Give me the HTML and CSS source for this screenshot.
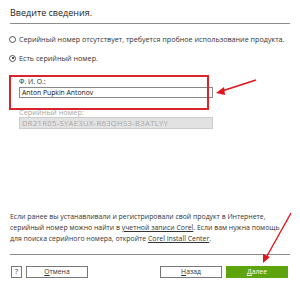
FILE: index.html
```html
<!DOCTYPE html>
<html lang="ru">
<head>
<meta charset="utf-8">
<link rel="stylesheet" href="styles.css">
</head>
<body>
<div class="dialog">
  <div class="title">Введите сведения.</div>
  <div class="rule top-rule"></div>
  <div class="radio-row r1"><span class="radio"></span><span>Серийный номер отсутствует, требуется пробное использование продукта.</span></div>
  <div class="radio-row r2"><span class="radio checked"></span><span>Есть серийный номер.</span></div>
  <div class="fields">
    <div class="label">Ф. И. О.:</div>
    <div class="input">Anton Pupkin Antonov</div>
    <div class="label muted">Серийный номер:</div>
    <div class="input disabled">DR21R05-SYAE3UX-R63QHS3-B3ATLYY</div>
  </div>
  <div class="spacer"></div>
  <div class="info">
    <div>Если ранее вы устанавливали и регистрировали свой продукт в Интернете,</div>
    <div>серийный номер можно найти в <span class="link">учетной записи Corel</span>. Если вам нужна помощь</div>
    <div>для поиска серийного номера, откройте <span class="link">Corel Install Center</span>.</div>
  </div>
  <div class="rule bottom-rule"></div>
  <div class="buttons">
    <div class="left">
      <span class="btn help">?</span>
      <span class="btn wide"><span class="key">О</span>тмена</span>
    </div>
    <div class="right">
      <span class="btn wide"><span class="key">Н</span>азад</span>
      <span class="btn wide primary"><span class="key">Д</span>алее</span>
    </div>
  </div>
  <div class="highlight"></div>
  <svg class="arrows" width="300" height="286" viewBox="0 0 300 286">
    <line x1="256" y1="80" x2="222" y2="91" stroke="#e0161c" stroke-width="1.6"/>
    <polygon points="216,93 224,87 225,95" fill="#e0161c"/>
    <line x1="291" y1="213" x2="267" y2="256" stroke="#e0161c" stroke-width="1.4"/>
    <polygon points="263,263 263,254 270,257" fill="#e0161c"/>
  </svg>
</div>
</body>
</html>
```
FILE: styles.css
```css
html, body { margin: 0; padding: 0; background: #fff; }
.dialog {
  position: relative;
  width: 300px;
  height: 286px;
  font-family: "Open Sans", "Noto Sans", sans-serif;
  color: #222;
  display: flex;
  flex-direction: column;
  overflow: hidden;
}
.title { font-size: 9px; margin: 7px 0 0 10px; line-height: 12px; }
.rule { height: 1px; background: #8c8c8c; margin: 0 10px; }
.top-rule { margin-top: 4px; }
.radio-row { display: flex; align-items: center; gap: 3px; font-size: 7.2px; margin-left: 9px; line-height: 10px; color: #333; }
.r1 { margin-top: 10px; }
.r2 { margin-top: 9px; }
.radio { width: 7px; height: 7px; border: 1px solid #555; border-radius: 50%; box-sizing: border-box; position: relative; flex: none; }
.radio.checked::after { content: ""; position: absolute; left: 1.5px; top: 1.5px; width: 2px; height: 2px; border-radius: 50%; background: #111; }
.fields { margin: 15px 0 0 19px; width: 194px; display: flex; flex-direction: column; }
.label { font-size: 6.8px; line-height: 8px; color: #222; }
.label.muted { color: #a8a8a8; margin-top: 10px; font-size: 7.4px; }
.input { height: 11px; border: 1px solid #888; box-sizing: border-box; font-size: 6.8px; line-height: 9px; padding-left: 2px; color: #111; margin-top: 1px; }
.input.disabled { background: #e2e2e2; border-color: #ccc; color: #a9a9a9; height: 12px; line-height: 10px; font-size: 7.6px; letter-spacing: 0.35px; }
.spacer { flex: 1; }
.info { font-size: 6.9px; line-height: 11px; margin: 0 10px 10px 10px; color: #333; white-space: nowrap; }
.link { text-decoration: underline; }
.bottom-rule { margin-bottom: 11px; }
.buttons { display: flex; justify-content: space-between; margin: 0 12px 8px 11px; }
.left, .right { display: flex; gap: 4px; }
.btn { height: 12px; border: 1px solid #777; box-sizing: border-box; font-size: 6.8px; line-height: 10px; text-align: center; color: #333; background: #fff; }
.key { text-decoration: underline; }
.help { width: 11px; }
.wide { width: 62px; }
.primary { background: #5ea40d; border-color: #5ea40d; color: #fff; }
.highlight { position: absolute; left: 9px; top: 75px; width: 200px; height: 35px; border: 2px solid #d8242b; box-sizing: border-box; }
.arrows { position: absolute; left: 0; top: 0; }
```
